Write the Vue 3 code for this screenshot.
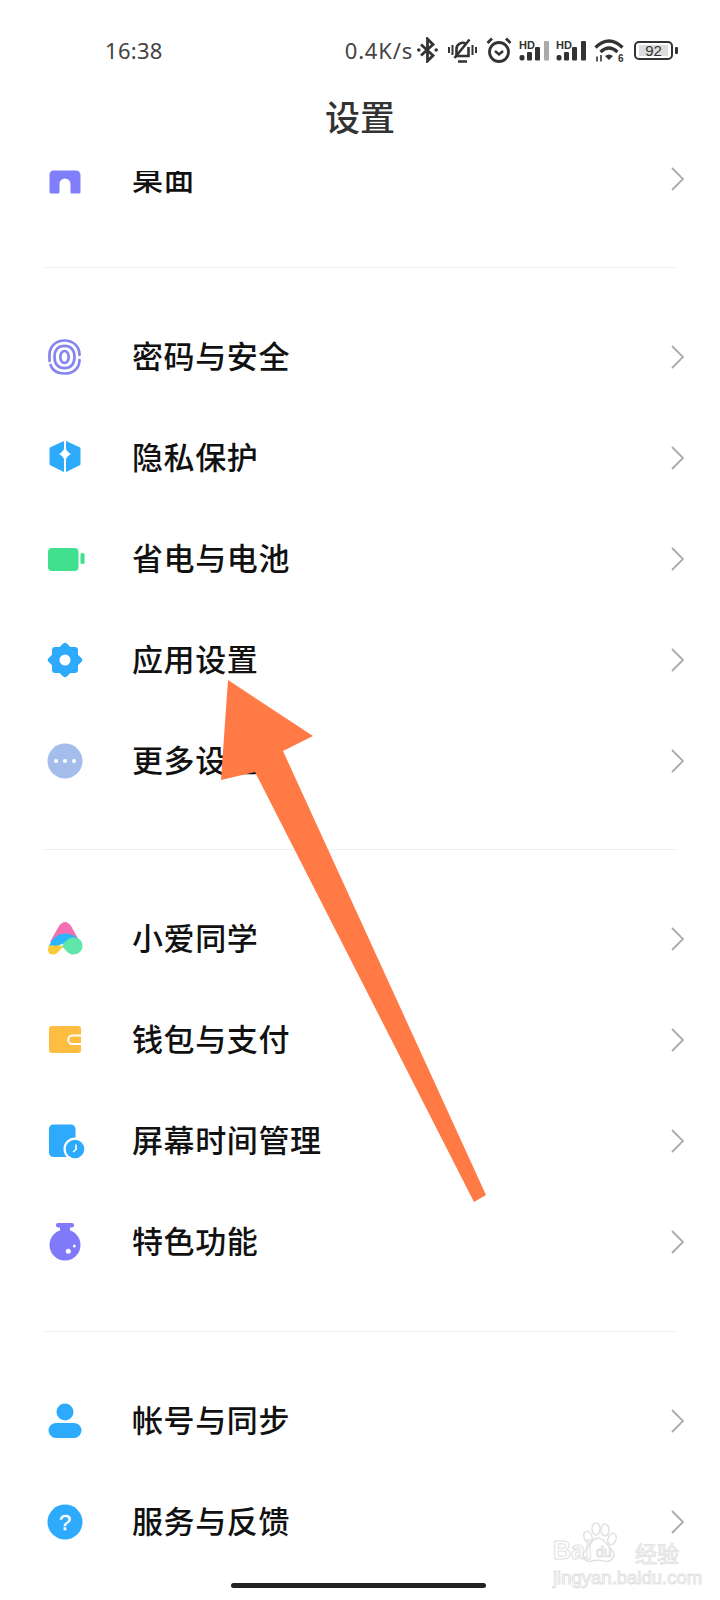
<template>
  <div class="screen">
    <header class="status-bar">
      <span class="time">16:38</span>
      <div class="status-right">
        <span class="speed">0.4K/s</span>
        <svg class="st st-bt" width="21" height="26" viewBox="0 0 21 26" fill="none" stroke="#333" stroke-width="2.800">
          <path d="M4 7.500 L16 18.500 L10.500 24 V2 L16 7.500 L4 18.500" />
          <circle cx="1.800" cy="13" r="1.800" fill="#333" stroke="none" />
          <circle cx="19.200" cy="13" r="1.800" fill="#333" stroke="none" />
        </svg>
        <svg class="st st-bell" width="29" height="25" viewBox="0 0 29 25" fill="none" stroke="#333" stroke-width="2.600">
          <path d="M8.500 17 V11 a6 6 0 0 1 9.500 -5 M20.500 9 V18 H7 M10 23.500 H19" />
          <path d="M6.500 20 L21.500 1.500" />
          <path d="M1 9 V15 M4.500 7 V17 M24.500 7 V17 M28 9 V15" stroke-width="2" />
        </svg>
        <svg class="st st-alarm" width="26" height="26" viewBox="0 0 26 26" fill="none" stroke="#333" stroke-width="2.800">
          <circle cx="13" cy="15" r="9.500" />
          <path d="M9 14 L13 17.500 L17 14" stroke-width="2.400" />
          <path d="M1.500 6 L6 1.500 M24.500 6 L20 1.500" />
        </svg>
        <svg class="st st-sig" width="31" height="21" viewBox="0 0 31 21" fill="#333">
          <text x="0" y="8.500" class="hd">HD</text>
          <rect x="0.500" y="15" width="5" height="5.500" rx="2" />
          <rect x="8" y="12" width="5" height="8.500" rx="1" />
          <rect x="16" y="7" width="5" height="13.500" rx="1" />
          <rect x="25" y="1" width="5" height="19.500" rx="1" fill="#aaa" />
        </svg>
        <svg class="st st-sig2" width="31" height="21" viewBox="0 0 31 21" fill="#333">
          <text x="0" y="8.500" class="hd">HD</text>
          <rect x="0.500" y="15" width="5" height="5.500" rx="2" />
          <rect x="8" y="12" width="5" height="8.500" rx="1" />
          <rect x="16" y="7" width="5" height="13.500" rx="1" />
          <rect x="25" y="1" width="5" height="19.500" rx="1" />
        </svg>
        <svg class="st st-wifi" width="31" height="28" viewBox="0 0 31 28" fill="none" stroke="#333" stroke-width="3.200">
          <path d="M1.500 9.500 Q15 -3.500 28.500 9.500 M6.500 14 Q15 6 23.500 14" />
          <path d="M11 18 Q15 15 19 18 L15 22 Z" fill="#333" stroke="none" />
          <path d="M3 18.500 V23.500 M7 17 V23.500" stroke-width="1.600" />
          <text x="24" y="23.800" class="six">6</text>
        </svg>
        <div class="battery">
          <div class="battery-body"><span class="battery-level">92</span></div>
          <i class="battery-tip"></i>
        </div>
      </div>
    </header>

    <h1 class="title">设置</h1>

    <section v-for="(group, g) in groups" :key="g" class="group">
      <div v-for="item in group" :key="item.label" class="row" :class="{ 'row-under-header': item.icon === 'home' }">
        <svg class="icon" width="44" height="44" viewBox="0 0 44 44">
          <template v-if="item.icon === 'home'">
            <path transform="translate(0 3)" fill="#7f7ffb" d="M10 10.500 H33 a4.500 4.500 0 0 1 4.500 4.500 V32 a1.500 1.500 0 0 1 -1.500 1.500 H29 a1.500 1.500 0 0 1 -1.500 -1.500 V24 a5.500 5.500 0 0 0 -11 0 V32 a1.500 1.500 0 0 1 -1.500 1.500 H8 a1.500 1.500 0 0 1 -1.500 -1.500 V15 a4.500 4.500 0 0 1 3.500 -4.500 Z" />
          </template>
          <template v-else-if="item.icon === 'finger'">
            <g fill="none" stroke="#8585ee" stroke-width="2.700" stroke-linecap="round">
              <path d="M6.500 26 V20 C6.500 11 13 5.500 21.500 5.500 C30 5.500 36.500 11 36.500 20 M36.500 25 C36.500 33.500 30 38.500 21.500 38.500 C15 38.500 9.500 35.500 7.500 30" />
              <path d="M11.500 22 C11.500 14.500 15.500 10.800 21.500 10.800 C27.500 10.800 31.500 14.500 31.500 22 C31.500 29.500 27.500 33.200 21.500 33.200 C15.500 33.200 11.500 29.500 11.500 22 Z" />
              <ellipse cx="21.500" cy="22" rx="4.200" ry="6" />
            </g>
          </template>
          <template v-else-if="item.icon === 'shield'">
            <path fill="#2eaafc" stroke="#2eaafc" stroke-width="3" stroke-linejoin="round" d="M22 6 L36 12.500 V28 L22 35 L8 28 V12.500 Z" />
            <path stroke="#fff" stroke-width="2" d="M22 2 V38" />
            <path fill="#fff" d="M22 10.500 Q23.500 16 28 18 Q23.500 20 22 26 Q20.500 20 16 18 Q20.500 16 22 10.500 Z" />
          </template>
          <template v-else-if="item.icon === 'battery'">
            <rect x="5" y="11" width="30.500" height="23" rx="4" fill="#40e08e" />
            <rect x="37.500" y="16" width="4" height="11" rx="1.500" fill="#40e08e" />
          </template>
          <template v-else-if="item.icon === 'gear'">
            <rect x="9" y="9" width="26" height="26" rx="3" fill="#2eaafc" />
            <rect x="9" y="9" width="26" height="26" rx="3" fill="#2eaafc" transform="rotate(45 22 22)" />
            <circle cx="22" cy="22" r="5.500" fill="#fff" />
          </template>
          <template v-else-if="item.icon === 'more'">
            <circle cx="22" cy="22" r="17.500" fill="#a5bdea" />
            <circle cx="13" cy="22" r="2" fill="#fff" />
            <circle cx="22" cy="22" r="2" fill="#fff" />
            <circle cx="31" cy="22" r="2" fill="#fff" />
          </template>
          <template v-else-if="item.icon === 'xiaoai'">
            <path fill="#f46fb0" d="M16 9 Q22 1 28 9 L37 25 L7 25 Z" />
            <path fill="#fdc934" d="M5.500 30 Q3.500 36.500 9 37.500 Q12 38 14.500 35.500 L20 30 L10 25 Z" />
            <path fill="#2bb5fb" d="M5.500 29.500 L9.500 22.500 Q15 16.500 22 16.500 Q30 16.500 35 22 L39 27 L24 25.500 L19.500 27 L13 29 Q8 27.500 5.500 29.500 Z" />
            <path fill="#5fe6a8" d="M31 20.500 C36 20.500 39.500 24 39.500 29 C39.500 34 35 37.500 30 37.500 C26.500 37.500 24.500 35 21 31.500 L19 29.500 C21.500 24.500 25 20.500 31 20.500 Z" />
          </template>
          <template v-else-if="item.icon === 'wallet'">
            <rect x="6" y="8" width="32" height="27" rx="3" fill="#fdbd40" />
            <path fill="#fdbd40" stroke="#fff" stroke-width="2" d="M38 17.500 H29.500 a4.200 4.200 0 0 0 0 8.400 H38" />
          </template>
          <template v-else-if="item.icon === 'screen'">
            <rect x="6" y="5.500" width="26.500" height="32.500" rx="4.500" fill="#2eaafc" />
            <circle cx="32" cy="30" r="11.500" fill="#fff" />
            <circle cx="32" cy="30" r="9.300" fill="#2eaafc" />
            <path d="M33 25.500 V30.500 L30 33" fill="none" stroke="#fff" stroke-width="1.600" />
          </template>
          <template v-else-if="item.icon === 'flask'">
            <rect x="13" y="3" width="18" height="4.500" rx="2" fill="#8079fa" />
            <rect x="17" y="6" width="10" height="8" fill="#8079fa" />
            <circle cx="22" cy="25" r="15.500" fill="#8079fa" />
            <circle cx="25.300" cy="31.300" r="2.500" fill="#fff" />
            <circle cx="31.300" cy="26" r="1.500" fill="#fff" />
          </template>
          <template v-else-if="item.icon === 'user'">
            <circle cx="22" cy="13" r="8.500" fill="#2eaafc" />
            <rect x="5.500" y="24" width="33" height="15" rx="7.500" fill="#2eaafc" />
          </template>
          <template v-else-if="item.icon === 'help'">
            <circle cx="22" cy="22" r="17.500" fill="#2eaafc" />
            <text x="22" y="29.500" class="q">?</text>
          </template>
        </svg>
        <span class="label">{{ item.label }}</span>
        <svg class="chevron" width="13" height="24" viewBox="0 0 13 24" fill="none" stroke="#aaaaaa" stroke-width="1.800">
          <path d="M1 1 L12 12 L1 23" />
        </svg>
      </div>
    </section>

    <!-- annotation drawn over the list -->
    <svg class="arrow" width="720" height="1600" viewBox="0 0 720 1600">
      <polygon fill="#ff7a45" points="228,680 313,736 283,751 486,1195 474,1202 255,772 221,780" />
    </svg>

    <div class="watermark">
      <svg class="paw" width="42" height="42" viewBox="0 0 42 42" fill="none" stroke="#e2e2e2" stroke-width="1.500">
        <ellipse cx="11" cy="15" rx="4" ry="6" transform="rotate(-20 11 15)" />
        <ellipse cx="19" cy="7" rx="4" ry="6" />
        <ellipse cx="28" cy="8" rx="4" ry="6" />
        <ellipse cx="35" cy="17" rx="4" ry="6" transform="rotate(20 35 17)" />
        <path d="M21 16 C28 16 30 24 35 28 C40 34 34 41 27 39 C23 38 19 38 15 39 C8 41 3 34 8 29 C13 25 14 16 21 16 Z" />
      </svg>
      <span class="wm-bai">Bai</span>
      <span class="wm-du">du</span>
      <span class="wm-cn">经验</span>
      <span class="wm-url">jingyan.baidu.com</span>
    </div>

    <div class="home-bar"></div>
  </div>
</template>

<script setup>
const groups = [
  [{ label: '桌面', icon: 'home' }],
  [
    { label: '密码与安全', icon: 'finger' },
    { label: '隐私保护', icon: 'shield' },
    { label: '省电与电池', icon: 'battery' },
    { label: '应用设置', icon: 'gear' },
    { label: '更多设置', icon: 'more' }
  ],
  [
    { label: '小爱同学', icon: 'xiaoai' },
    { label: '钱包与支付', icon: 'wallet' },
    { label: '屏幕时间管理', icon: 'screen' },
    { label: '特色功能', icon: 'flask' }
  ],
  [
    { label: '帐号与同步', icon: 'user' },
    { label: '服务与反馈', icon: 'help' }
  ]
]
</script>

<style scoped>
.screen {
  position: relative;
  width: 720px;
  height: 1600px;
  overflow: hidden;
  background: #fff;
  font-family: "Noto Sans CJK SC", "Noto Sans", sans-serif;
  color: #111;
}

.status-bar {
  display: flex;
  align-items: center;
  justify-content: space-between;
  height: 40px;
  padding: 30px 42px 0 105px;
  color: #444;
  font-family: "Noto Sans", sans-serif;
  font-size: 22px;
}

.time { letter-spacing: 0.3px; }

.status-right {
  display: flex;
  align-items: center;
}

.speed {
  margin-right: 4px;
  letter-spacing: 0.8px;
}

.st { flex: none; }
.st-bt { margin-right: 10px; }
.st-bell { margin-right: 9px; }
.st-alarm { margin-right: 7px; }
.st-sig { margin-right: 6px; }
.st-sig2 { margin-right: 7px; }
.st-wifi { margin: 4px 9px 0 0; }

.hd {
  font-family: "Liberation Sans", sans-serif;
  font-size: 11px;
  font-weight: 700;
}

.six {
  font-family: "Liberation Sans", sans-serif;
  font-size: 10px;
  font-weight: 700;
  fill: #333;
  stroke: none;
}

.battery {
  display: flex;
  align-items: center;
  gap: 2px;
}

.battery-body {
  display: flex;
  width: 39px;
  height: 19px;
  box-sizing: border-box;
  padding: 2px 3px;
  border: 2px solid #333;
  border-radius: 5px;
}

.battery-level {
  flex: 1;
  background: #ddd;
  color: #333;
  font-family: "Liberation Sans", sans-serif;
  font-size: 15px;
  line-height: 11px;
  text-align: center;
}

.battery-tip {
  width: 3px;
  height: 7px;
  border-radius: 1px;
  background: #333;
}

.title {
  margin: 31px 0 0;
  font-size: 35px;
  font-weight: 500;
  line-height: 29px;
  text-align: center;
  color: #333;
}

.group {
  padding-top: 40px;
  padding-bottom: 36px;
  border-bottom: 1px solid #efefef;
  margin-left: 44px;
  margin-right: 44px;
}

.group:first-of-type { padding-top: 0; }
.group:nth-of-type(3) { padding-bottom: 37px; }
.group:last-of-type { border-bottom: 0; }

.row {
  display: flex;
  align-items: center;
  height: 101px;
  margin: 0 -8px 0 -1px;
}

.icon {
  flex: none;
  margin-bottom: 4px;
}

.label {
  flex: 1;
  margin-left: 45px;
  padding-bottom: 7px;
  font-size: 31px;
  font-weight: 500;
  letter-spacing: 0.6px;
  line-height: 40px;
}

/* first row has scrolled partly under the title bar */
.row-under-header .label {
  clip-path: inset(14px 0 0 0);
}

.chevron {
  flex: none;
  margin-top: -4px;
}

.q {
  font-family: "Liberation Sans", sans-serif;
  font-size: 22px;
  fill: #fff;
  stroke: #fff;
  stroke-width: 0.4;
  text-anchor: middle;
}

.arrow {
  position: absolute;
  top: 0;
  left: 0;
  pointer-events: none;
}

.watermark {
  position: absolute;
  left: 553px;
  top: 1522px;
  width: 130px;
  height: 62px;
  color: transparent;
  -webkit-text-stroke: 1px #e2e2e2;
  font-family: "Liberation Sans", sans-serif;
}

.paw {
  position: absolute;
  left: 24px;
  top: 0;
}

.wm-bai {
  position: absolute;
  left: 0;
  top: 14px;
  font-size: 25px;
  font-weight: 700;
}

.wm-du {
  position: absolute;
  left: 43px;
  top: 22px;
  font-size: 14px;
}

.wm-cn {
  position: absolute;
  left: 82px;
  top: 18px;
  font-size: 22px;
  font-family: "Noto Sans CJK SC", sans-serif;
  line-height: 24px;
}

.wm-url {
  position: absolute;
  left: 0;
  top: 45px;
  font-size: 18.500px;
  white-space: nowrap;
}

.home-bar {
  position: absolute;
  left: 231px;
  bottom: 12px;
  width: 255px;
  height: 5px;
  border-radius: 3px;
  background: #222;
}
</style>
